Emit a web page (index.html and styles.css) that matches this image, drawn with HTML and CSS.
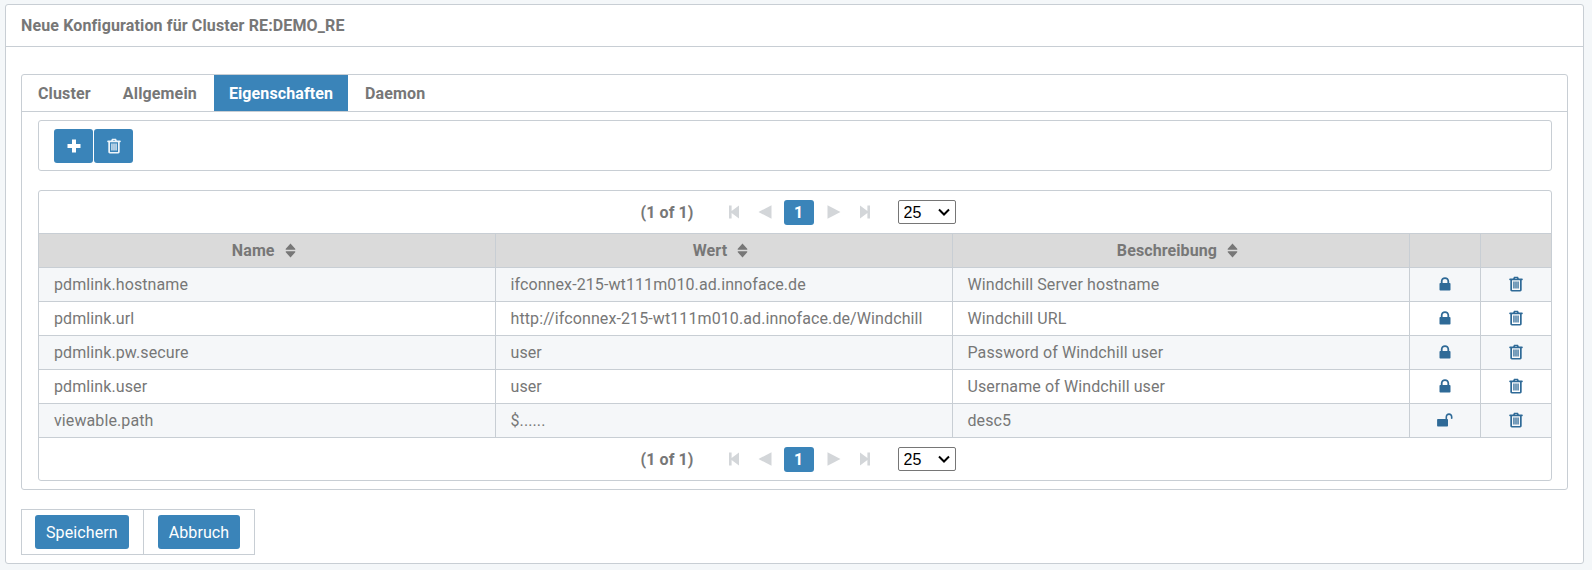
FILE: index.html
```html
<!DOCTYPE html>
<html lang="de">
<head>
<meta charset="utf-8">
<title>Neue Konfiguration</title>
<link rel="stylesheet" href="styles.css">
</head>
<body>
<svg class="defs" width="0" height="0">
  <defs>
    <symbol id="i-trash" viewBox="0 0 14 16"><path d="M5 .8h4l.9 1.800H13a.7.7 0 0 1 0 1.600h-.3v9.600c0 .9-.7 1.600-1.500 1.600H2.800c-.8 0-1.500-.7-1.500-1.600V4.200H1a.7.7 0 0 1 0-1.600h3.100zM5.800 2.600h2.400l-.3-.6H6.100zM3 4.200v9.700h8V4.200zM4.300 5.500h1.300v7H4.300zM6.350 5.500h1.300v7h-1.300zM8.400 5.500h1.300v7H8.400z" fill="currentColor" fill-rule="evenodd"/></symbol>
    <symbol id="i-lock" viewBox="0 0 12 14"><path d="M1.800 6V4.300C1.800 1.800 3.700.2 6 .2s4.200 1.600 4.200 4.100V6h.5c.5 0 .8.300.8.800v5.900c0 .5-.3.800-.8.800H1.300c-.5 0-.8-.3-.8-.8V6.800c0-.5.3-.8.800-.8zm1.800 0h4.800V4.300c0-1.400-1.100-2.300-2.400-2.300s-2.400.9-2.400 2.300z" fill="currentColor" fill-rule="evenodd"/></symbol>
    <symbol id="i-unlock" viewBox="0 0 16 14"><path d="M.8 6H8.500V4C8.500 1.900 10 .2 12 .2s3.500 1.700 3.500 3.800v1.600c0 .5-1.600.5-1.600 0V4c0-1.200-.8-2.100-1.900-2.100s-1.900.9-1.900 2.100v2h.2c.4 0 .7.300.7.800v5.900c0 .5-.3.800-.7.800H.8c-.4 0-.7-.3-.7-.8V6.800c0-.5.3-.8.700-.8z" fill="currentColor"/></symbol>
    <symbol id="i-sort" viewBox="0 0 10 14"><path d="M5 .4l4.400 5c.3.400.1.900-.4.900H1c-.5 0-.7-.5-.4-.9zM5 13.600l-4.400-5c-.3-.4-.1-.9.4-.9h8c.5 0 .7.500.4.900z" fill="currentColor"/></symbol>
    <symbol id="i-first" viewBox="0 0 14 14"><path d="M2 .5h2.600v5.600L12 .5v13L4.600 7.900v5.600H2z" fill="currentColor"/></symbol>
    <symbol id="i-prev" viewBox="0 0 14 14"><path d="M.5 7L13.500.2v13.600z" fill="currentColor"/></symbol>
    <symbol id="i-next" viewBox="0 0 14 14"><path d="M13.500 7L.5.2v13.600z" fill="currentColor"/></symbol>
    <symbol id="i-last" viewBox="0 0 14 14"><path d="M12 .5H9.400v5.600L2 .5v13l7.400-5.600v5.600H12z" fill="currentColor"/></symbol>
  </defs>
</svg>
<main class="panel">
  <header class="panel-head">Neue Konfiguration für Cluster RE:DEMO_RE</header>
  <div class="panel-body">
    <section class="tabs">
      <nav class="tab-bar">
        <a class="tab">Cluster</a>
        <a class="tab">Allgemein</a>
        <a class="tab tab-active">Eigenschaften</a>
        <a class="tab">Daemon</a>
      </nav>
      <div class="tab-content">
        <div class="toolbar">
          <button class="tool-btn" aria-label="Neu"><svg class="i-plus" viewBox="0 0 14 14"><path d="M5 .5h4V5h4.500v4H9v4.500H5V9H.5V5H5z" fill="currentColor"/></svg></button>
          <button class="tool-btn" aria-label="Löschen"><svg class="i-tool-trash"><use href="#i-trash"/></svg></button>
        </div>
        <div class="datatable">
          <div class="pager pager-top">
            <span class="pager-count">(1 of 1)</span>
            <svg class="pg pg-first"><use href="#i-first"/></svg>
            <svg class="pg pg-prev"><use href="#i-prev"/></svg>
            <span class="pg-num">1</span>
            <svg class="pg pg-next"><use href="#i-next"/></svg>
            <svg class="pg pg-last"><use href="#i-last"/></svg>
            <select class="pg-select"><option>25</option></select>
          </div>
          <table class="grid">
            <colgroup>
              <col class="c-name"><col class="c-wert"><col class="c-desc"><col class="c-lock"><col class="c-del">
            </colgroup>
            <thead>
              <tr>
                <th>Name <svg class="i-sort"><use href="#i-sort"/></svg></th>
                <th>Wert <svg class="i-sort"><use href="#i-sort"/></svg></th>
                <th>Beschreibung <svg class="i-sort"><use href="#i-sort"/></svg></th>
                <th></th>
                <th></th>
              </tr>
            </thead>
            <tbody>
              <tr class="odd">
                <td>pdmlink.hostname</td><td>ifconnex-215-wt111m010.ad.innoface.de</td><td>Windchill Server hostname</td>
                <td class="ic"><svg class="i-lock"><use href="#i-lock"/></svg></td><td class="ic"><svg class="i-trash"><use href="#i-trash"/></svg></td>
              </tr>
              <tr>
                <td>pdmlink.url</td><td>http://ifconnex-215-wt111m010.ad.innoface.de/Windchill</td><td>Windchill URL</td>
                <td class="ic"><svg class="i-lock"><use href="#i-lock"/></svg></td><td class="ic"><svg class="i-trash"><use href="#i-trash"/></svg></td>
              </tr>
              <tr class="odd">
                <td>pdmlink.pw.secure</td><td>user</td><td>Password of Windchill user</td>
                <td class="ic"><svg class="i-lock"><use href="#i-lock"/></svg></td><td class="ic"><svg class="i-trash"><use href="#i-trash"/></svg></td>
              </tr>
              <tr>
                <td>pdmlink.user</td><td>user</td><td>Username of Windchill user</td>
                <td class="ic"><svg class="i-lock"><use href="#i-lock"/></svg></td><td class="ic"><svg class="i-trash"><use href="#i-trash"/></svg></td>
              </tr>
              <tr class="odd">
                <td>viewable.path</td><td>$......</td><td>desc5</td>
                <td class="ic"><svg class="i-unlock"><use href="#i-unlock"/></svg></td><td class="ic"><svg class="i-trash"><use href="#i-trash"/></svg></td>
              </tr>
            </tbody>
          </table>
          <div class="pager pager-bottom">
            <span class="pager-count">(1 of 1)</span>
            <svg class="pg pg-first"><use href="#i-first"/></svg>
            <svg class="pg pg-prev"><use href="#i-prev"/></svg>
            <span class="pg-num">1</span>
            <svg class="pg pg-next"><use href="#i-next"/></svg>
            <svg class="pg pg-last"><use href="#i-last"/></svg>
            <select class="pg-select"><option>25</option></select>
          </div>
        </div>
      </div>
    </section>
    <div class="actions">
      <div class="action-cell"><button class="btn">Speichern</button></div>
      <div class="action-cell"><button class="btn">Abbruch</button></div>
    </div>
  </div>
</main>
</body>
</html>
```
FILE: styles.css
```css
* { box-sizing: border-box; }
html, body { margin: 0; height: 100%; }
body {
  background: #f4f7f9;
  padding: 4px 8px 0 5px;
  font-family: Roboto, "Liberation Sans", sans-serif;
  font-size: 16px;
  letter-spacing: .1px;
  color: #777;
  overflow: hidden;
}
.defs { position: absolute; }
.panel {
  height: 560px;
  background: #fff;
  border: 1px solid #c8ced4;
  border-radius: 3px;
}
.panel-head {
  height: 42px;
  padding-left: 15px;
  border-bottom: 1px solid #c8ced4;
  font-weight: 700;
  letter-spacing: .13px;
  line-height: 41px;
}
.panel-body { padding: 27px 15px 0; }
.tabs {
  height: 416px;
  border: 1px solid #c8ced4;
  border-radius: 3px;
}
.tab-bar {
  display: flex;
  height: 37px;
  border-bottom: 1px solid #c8ced4;
}
.tab {
  padding: 0 16px;
  font-weight: 700;
  letter-spacing: .15px;
  line-height: 37px;
}
.tab-active {
  margin: 0 1px;
  padding: 0 15px;
  background: #3a84b9;
  color: #fff;
  letter-spacing: .1px;
}
.tab-content { padding: 8px 15px 0 16px; }
.toolbar {
  display: flex;
  align-items: center;
  gap: 1px;
  height: 51px;
  padding-left: 15px;
  border: 1px solid #c8ced4;
  border-radius: 3px;
}
.tool-btn {
  display: flex;
  align-items: center;
  justify-content: center;
  width: 39px;
  height: 34px;
  padding: 0;
  border: 0;
  border-radius: 3px;
  background: #3a84b9;
  color: #fff;
}
.i-plus { width: 14px; height: 14px; }
.i-tool-trash { width: 14px; height: 16px; color: #eef5fa; }
.datatable {
  margin-top: 19px;
  height: 291px;
  border: 1px solid #c8ced4;
  border-radius: 3px;
}
.pager {
  display: flex;
  align-items: center;
  justify-content: center;
  padding-left: 6px;
  font-weight: 700;
}
.pager-top { height: 42px; }
.pager-bottom { height: 42px; }
.pager-count { margin-right: 33px; }
.pg { width: 14px; height: 14px; color: #d3d6d9; }
.pg-first { margin-right: 17px; }
.pg-prev { margin-right: 12px; }
.pg-num {
  width: 30px;
  height: 25px;
  margin-right: 13px;
  border-radius: 3px;
  background: #3a84b9;
  color: #fff;
  line-height: 25px;
  text-align: center;
}
.pg-next { margin-right: 17px; }
.pg-last { margin-right: 26px; }
.pg-select {
  appearance: none;
  width: 58px;
  height: 24px;
  padding: 0 0 0 5px;
  border: 1px solid #767676;
  border-radius: 2px;
  background: #fff url("data:image/svg+xml,%3Csvg xmlns='http://www.w3.org/2000/svg' width='12' height='8'%3E%3Cpath d='M1 1.500l5 5 5-5' fill='none' stroke='%23000' stroke-width='2'/%3E%3C/svg%3E") right 5px center no-repeat;
  color: #000;
  font-family: "Liberation Sans", Arial, sans-serif;
  font-size: 16px;
}
.grid {
  width: 100%;
  table-layout: fixed;
  border-collapse: collapse;
}
.c-name { width: 456px; }
.c-wert { width: 457px; }
.c-desc { width: 457px; }
.c-lock { width: 71px; }
.grid th {
  height: 34px;
  padding: 0 6px 0 0;
  border: 1px solid #c8ced4;
  background: #dadada;
  font-size: 16px;
  font-weight: 700;
}
.grid td {
  height: 34px;
  padding: 0 15px;
  border: 1px solid #c8ced4;
  font-size: 16px;
  white-space: nowrap;
}
.grid tr > :first-child { border-left: 0; }
.grid tr > :last-child { border-right: 0; }
.odd td { background: #f5f7f9; }
.grid td.ic { padding: 0 0 2px; color: #2f6a97; text-align: center; line-height: 0; }
.i-sort { width: 11px; height: 15px; margin-left: 6px; vertical-align: -2px; }
.i-lock { width: 12px; height: 14px; vertical-align: middle; }
.i-unlock { width: 16px; height: 14px; vertical-align: middle; }
.i-trash { width: 14px; height: 16px; vertical-align: middle; }
.actions {
  display: flex;
  width: 234px;
  height: 46px;
  margin-top: 19px;
  border: 1px solid #c8ced4;
}
.action-cell {
  display: flex;
  align-items: center;
  padding: 0 14px 0 13px;
}
.action-cell + .action-cell { padding-left: 14px; border-left: 1px solid #c8ced4; }
.btn {
  height: 34px;
  padding: 0 11px;
  border: 0;
  border-radius: 3px;
  background: #3a84b9;
  color: #fff;
  font-family: inherit;
  font-size: 16px;
  letter-spacing: .1px;
}
```
